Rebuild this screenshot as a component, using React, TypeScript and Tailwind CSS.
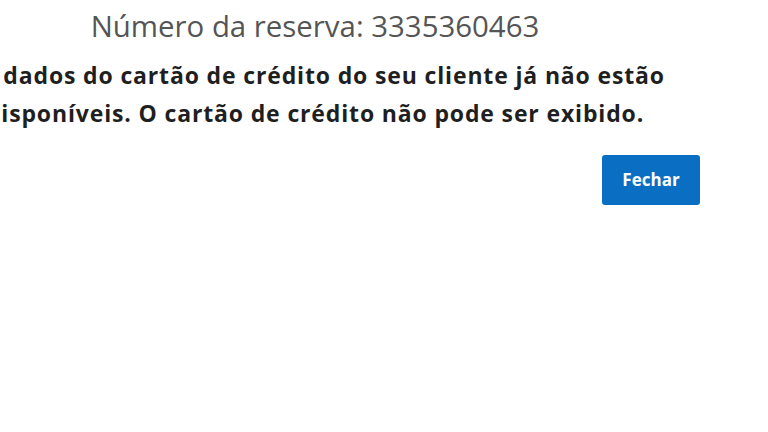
export default function App() {
  return (
    <div className="w-[768px] h-[432px] overflow-hidden bg-white" style={{ fontFamily: '"Open Sans", "Noto Sans", sans-serif' }}>
      <div className="w-[770px] ml-[-70px] flex flex-col items-center">
        <h1 className="mt-[6px] text-[29.4px] leading-[40px] text-[#555555] font-normal text-center">
          Número da reserva: 3335360463
        </h1>
        <p className="mt-[10px] text-[23px] leading-[38px] tracking-[0.85px] font-bold text-[#1f1f1f] text-center whitespace-nowrap">
          Os dados do cartão de crédito do seu cliente já não estão
          <br />
          disponíveis. O cartão de crédito não pode ser exibido.
        </p>
        <div className="w-full flex justify-end mt-[23px]">
          <button className="w-[98px] h-[50px] rounded-[3px] bg-[#0a6fc2] text-white text-[17px] font-bold">
            Fechar
          </button>
        </div>
      </div>
    </div>
  );
}
